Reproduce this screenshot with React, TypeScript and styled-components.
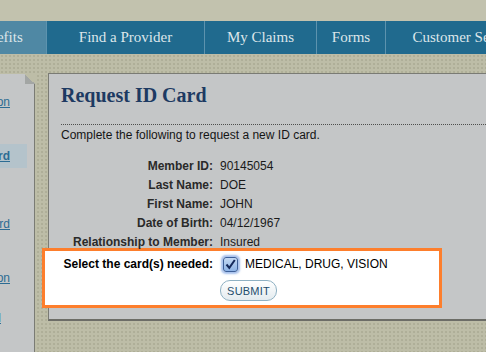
import React from "react";
import styled, { createGlobalStyle } from "styled-components";

const Global = createGlobalStyle`
  html, body {
    margin: 0;
    padding: 0;
    overflow: hidden;
    width: 486px;
    height: 352px;
    background: #c2c2ae;
    font-family: "Liberation Sans", Arial, sans-serif;
  }
`;

const Page = styled.div`
  width: 486px;
  height: 352px;
  overflow: hidden;
  display: flex;
  flex-direction: column;
`;

const TopBand = styled.div`
  height: 21px;
  background: #c2c2ae;
  flex: none;
`;

const Nav = styled.nav`
  height: 33px;
  flex: none;
  display: flex;
  margin-left: -75px;
  background: #206a8e;
`;

const Tab = styled.div<{ $w: number; $active?: boolean }>`
  flex: none;
  width: ${(p) => p.$w}px;
  height: 33px;
  line-height: 33px;
  text-align: center;
  white-space: nowrap;
  font-family: "Liberation Serif", "Times New Roman", serif;
  font-size: 15px;
  color: #dde6ea;
  background: ${(p) => (p.$active ? "#4f88a4" : "#206a8e")};
  border-right: 1px solid #5d93ae;
`;

const Content = styled.div`
  flex: 1;
  display: flex;
  gap: 13px;
  padding-top: 19px;
  background-color: #bdbda7;
  background-image: radial-gradient(circle, #aeae98 0.7px, transparent 1.1px);
  background-size: 4px 4px;
`;

const Sidebar = styled.aside`
  position: relative;
  flex: none;
  width: 160px;
  margin-left: -125px;
  margin-top: 1px;
  padding-top: 16px;
  background: #c4c6c7;
  border-right: 1px solid #7a7b74;
  box-sizing: border-box;
  &::after {
    content: "";
    position: absolute;
    top: 0;
    right: -1px;
    width: 10px;
    height: 10px;
    background: linear-gradient(to bottom left, #bdbda7 50%, #a3a6a4 50%);
  }
`;

const SideLink = styled.a<{ $gap?: number; $current?: boolean; $pad?: number }>`
  display: block;
  margin-top: ${(p) => p.$gap ?? 0}px;
  width: 152px;
  padding: 5px ${(p) => p.$pad ?? 17}px 5px 0;
  box-sizing: border-box;
  text-align: right;
  font-size: 12px;
  line-height: 14px;
  white-space: nowrap;
  color: #2c6c93;
  text-decoration: underline;
  font-weight: ${(p) => (p.$current ? "bold" : "normal")};
  background: ${(p) => (p.$current ? "#b4c3cb" : "transparent")};
`;

const Panel = styled.main`
  flex: none;
  width: 470px;
  height: 248px;
  box-sizing: border-box;
  background: #c4c6c7;
  border-left: 1px solid #7a7b74;
  border-top: 1px solid #7a7b74;
  border-bottom: 2px solid #6c6d67;
  padding: 9px 0 0 12px;
`;

const Title = styled.h1`
  margin: 0;
  font-family: "Liberation Serif", "Times New Roman", serif;
  font-weight: bold;
  font-size: 20px;
  line-height: 24px;
  color: #1d3a62;
`;

const Rule = styled.hr`
  margin: 17px 0 0 0;
  border: 0;
  border-top: 1px dotted #4e4f4d;
  height: 0;
`;

const Intro = styled.p`
  margin: 2px 0 0 0;
  font-size: 12px;
  line-height: 16px;
  color: #151515;
`;

const Fields = styled.div`
  margin-top: 14px;
  display: grid;
  grid-template-columns: 152px auto;
  column-gap: 7px;
  font-size: 12px;
  line-height: 19px;
`;

const Label = styled.div`
  text-align: right;
  font-weight: bold;
  color: #2a2a2a;
  white-space: nowrap;
`;

const Value = styled.div`
  color: #1a1a1a;
  white-space: nowrap;
`;

const Highlight = styled.div`
  margin: -4px 0 0 -19px;
  width: 400px;
  box-sizing: border-box;
  border: 3px solid #fd7e2c;
  background: #ffffff;
  padding: 4px 0 4px 16px;
  display: grid;
  grid-template-columns: 152px auto;
  column-gap: 7px;
  row-gap: 7px;
  font-size: 12px;
  line-height: 18px;
`;

const SelectLabel = styled.div`
  text-align: right;
  font-weight: bold;
  color: #000;
  white-space: nowrap;
`;

const Choice = styled.label`
  display: flex;
  align-items: center;
  gap: 7px;
  color: #000;
  white-space: nowrap;
  padding-left: 3px;
`;

const Check = styled.span`
  width: 13px;
  height: 13px;
  flex: none;
  display: flex;
  align-items: center;
  justify-content: center;
  border-radius: 3px;
  border: 1px solid #3d5f98;
  background: linear-gradient(#c4d9f3, #8db3e6);
  box-shadow: 0 0 2px 2px rgba(92, 140, 220, 0.55);
`;

const Submit = styled.button`
  grid-column: 2;
  justify-self: start;
  width: 57px;
  height: 21px;
  padding: 0;
  border-radius: 10px;
  border: 1px solid #8fb1c3;
  background: linear-gradient(#ffffff, #e3ebef);
  font-family: "Liberation Sans", Arial, sans-serif;
  font-size: 11px;
  color: #1e4d6d;
  letter-spacing: 0.2px;
`;

export default function App() {
  return (
    <Page>
      <Global />
      <TopBand />
      <Nav>
        <Tab $w={121} $active>My Benefits</Tab>
        <Tab $w={157}>Find a Provider</Tab>
        <Tab $w={111}>My Claims</Tab>
        <Tab $w={68}>Forms</Tab>
        <Tab $w={160}>Customer Service</Tab>
      </Nav>
      <Content>
        <Sidebar>
          <SideLink $gap={0}>Claims Information</SideLink>
          <SideLink $gap={30} $current>Request ID Card</SideLink>
          <SideLink $gap={44}>Print Temporary ID Card</SideLink>
          <SideLink $gap={30}>Coordination</SideLink>
          <SideLink $gap={16} $pad={26}>Email</SideLink>
        </Sidebar>
        <Panel>
          <Title>Request ID Card</Title>
          <Rule />
          <Intro>Complete the following to request a new ID card.</Intro>
          <Fields>
            <Label>Member ID:</Label>
            <Value>90145054</Value>
            <Label>Last Name:</Label>
            <Value>DOE</Value>
            <Label>First Name:</Label>
            <Value>JOHN</Value>
            <Label>Date of Birth:</Label>
            <Value>04/12/1967</Value>
            <Label>Relationship to Member:</Label>
            <Value>Insured</Value>
          </Fields>
          <Highlight>
            <SelectLabel>Select the card(s) needed:</SelectLabel>
            <Choice>
              <Check>
                <svg width="11" height="11" viewBox="0 0 11 11">
                  <path d="M1.5 5.5 L4.3 8.8 L9.8 1" fill="none" stroke="#14285a" strokeWidth="2" />
                </svg>
              </Check>
              MEDICAL, DRUG, VISION
            </Choice>
            <Submit type="button">SUBMIT</Submit>
          </Highlight>
        </Panel>
      </Content>
    </Page>
  );
}
